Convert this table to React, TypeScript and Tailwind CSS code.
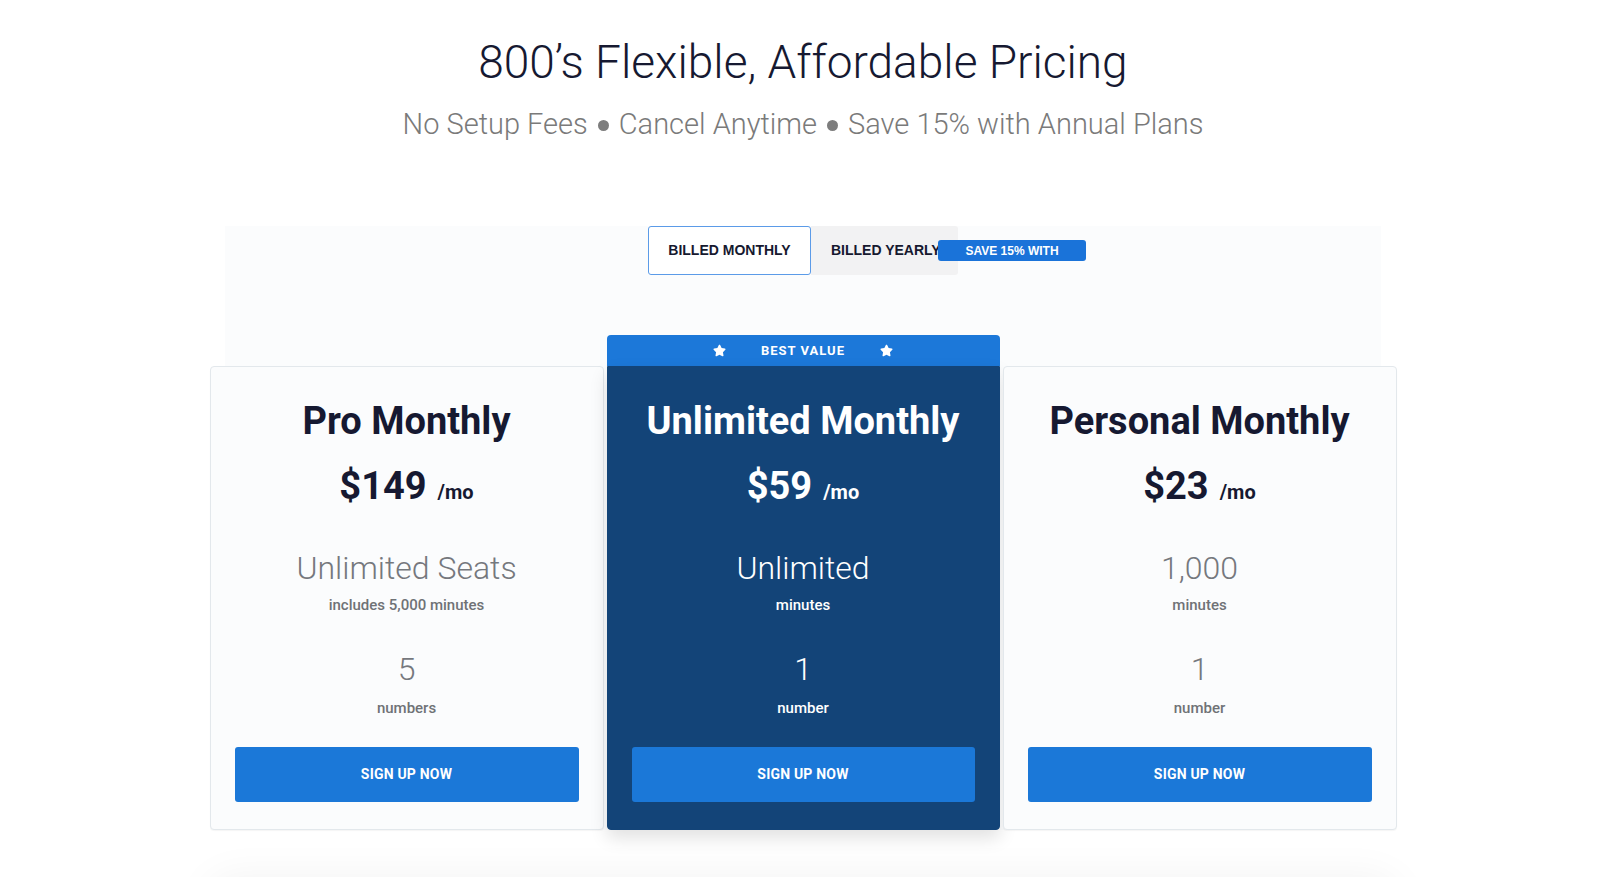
import React from "react";
import { FaStar } from "react-icons/fa";

type Plan = {
  name: string;
  price: string;
  big: string;
  bigSub: string;
  num: string;
  numSub: string;
  dark?: boolean;
};

const plans: Plan[] = [
  { name: "Pro Monthly", price: "$149", big: "Unlimited Seats", bigSub: "includes 5,000 minutes", num: "5", numSub: "numbers" },
  { name: "Unlimited Monthly", price: "$59", big: "Unlimited", bigSub: "minutes", num: "1", numSub: "number", dark: true },
  { name: "Personal Monthly", price: "$23", big: "1,000", bigSub: "minutes", num: "1", numSub: "number" },
];

function CardBody({ p }: { p: Plan }) {
  const titleColor = p.dark ? "text-white" : "text-[#161931]";
  const bigColor = p.dark ? "text-white" : "text-[#75787d]";
  const smallColor = p.dark ? "text-white" : "text-[#6f7276]";
  return (
    <div
      className={
        p.dark
          ? "flex flex-col items-center h-[464px] bg-[#134478] border border-[#134478] rounded-b-[4px] px-[24px] pb-[25px] shadow-[0_8px_18px_rgba(0,0,0,0.12)]"
          : "flex flex-col items-center h-[464px] bg-[#fbfcfd] border border-[#e3e8ec] rounded-[4px] px-[24px] pb-[25px] shadow-[0_1px_1px_rgba(0,0,0,0.04)]"
      }
    >
      <div className={`mt-[31px] text-[38px] leading-[46px] font-bold ${titleColor}`}>{p.name}</div>
      <div className={`mt-[19px] flex items-baseline leading-[46px] font-bold ${titleColor}`}>
        <span className="text-[38px]">{p.price}</span>
        <span className="ml-[11px] text-[20px]">/mo</span>
      </div>
      <div className={`mt-[34px] text-[32px] leading-[38px] font-light ${bigColor}`}>{p.big}</div>
      <div className={`mt-[8px] text-[15px] leading-[20px] font-medium ${smallColor}`}>{p.bigSub}</div>
      <div className={`mt-[35px] text-[32px] leading-[38px] font-light ${bigColor}`}>{p.num}</div>
      <div className={`mt-[10px] text-[15px] leading-[20px] font-medium ${smallColor}`}>{p.numSub}</div>
      <button className="mt-[29px] w-full h-[55px] shrink-0 bg-[#1b78d8] rounded-[3px] text-white text-[14px] font-bold tracking-[0.2px]">
        SIGN UP NOW
      </button>
    </div>
  );
}

function Dot() {
  return <span className="inline-block w-[11px] h-[11px] rounded-full bg-[#7d7d7d] mx-[10px] align-[3px]" aria-hidden="true" />;
}

export default function App() {
  return (
    <div className="min-h-[877px] w-full bg-white overflow-hidden font-[Roboto,'Liberation_Sans',sans-serif] flex flex-col items-center pl-[6px]">
      <h1 className="mt-[35px] text-[46px] leading-[55px] font-light text-[#161931]">
        800’s Flexible, Affordable Pricing
      </h1>
      <p className="mt-[17px] text-[29px] leading-[34px] font-light text-[#7a7a7a] whitespace-nowrap">
        No Setup Fees<Dot />Cancel Anytime<Dot />Save 15% with Annual Plans
      </p>

      <div className="mt-[85px] w-[1156px] bg-[#fbfcfd] flex flex-col items-center">
        {/* toggle */}
        <div className="flex h-[49px] font-['Liberation_Sans',Arial,sans-serif] font-bold text-[14px] text-[#16192f]">
          <div className="w-[163px] h-[49px] flex items-center justify-center bg-white border-[1.5px] border-[#5b9be8] rounded-[3px]">
            BILLED MONTHLY
          </div>
          <div className="relative w-[147px] h-[49px] flex items-center pl-[20px] bg-[#f2f2f3] rounded-r-[3px] whitespace-nowrap">
            BILLED YEARLY
            <div className="absolute left-[127px] top-[14px] w-[148px] h-[21px] flex items-center justify-center bg-[#1a73d9] rounded-[3px] text-white text-[12px]">
              SAVE 15% WITH
            </div>
          </div>
        </div>

        {/* cards */}
        <div className="mt-[60px] -mx-[16px] w-[1187px] grid grid-cols-[394px_393px_394px] gap-x-[3px] items-end">
          <CardBody p={plans[0]} />
          <div className="flex flex-col">
            <div className="h-[31px] bg-[#1c78d9] rounded-t-[4px] flex items-center justify-center gap-[35px] text-white">
              <FaStar className="w-[13px] h-[13px]" />
              <span className="text-[13px] font-bold tracking-[1px]">BEST VALUE</span>
              <FaStar className="w-[13px] h-[13px]" />
            </div>
            <CardBody p={plans[1]} />
          </div>
          <CardBody p={plans[2]} />
        </div>
      </div>

      <div className="mt-[52px] w-[1180px] h-[60px] rounded-[20px] bg-white shadow-[0_0_40px_6px_rgba(0,0,0,0.05)]" />
    </div>
  );
}
